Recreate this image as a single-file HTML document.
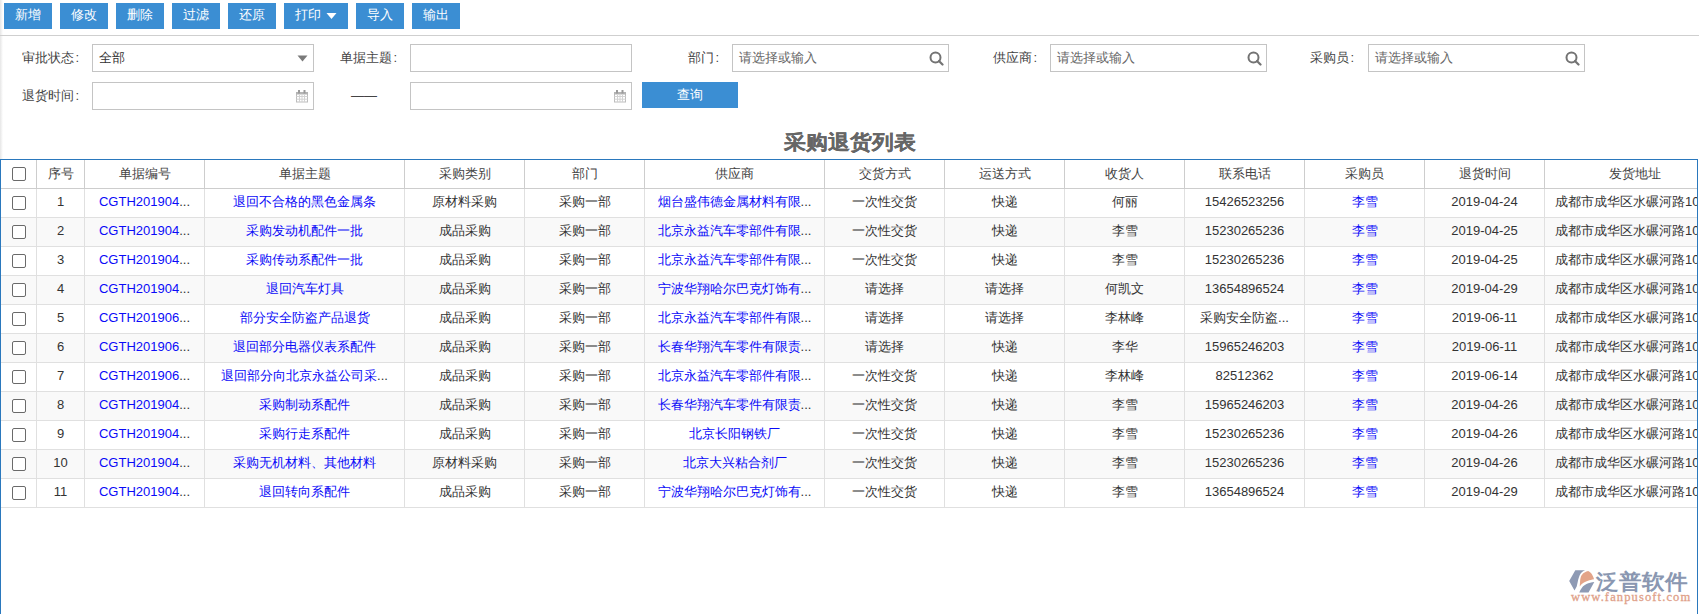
<!DOCTYPE html>
<html><head><meta charset="utf-8">
<style>
*{margin:0;padding:0;box-sizing:border-box;}
html,body{width:1699px;height:614px;overflow:hidden;background:#fff;}
body{font-family:"Liberation Sans",sans-serif;font-size:13px;color:#333;position:relative;}
.edge{position:absolute;left:0;top:0;width:3px;height:159px;background:linear-gradient(to right,#e6e6e6,#fff);}
.btn{position:absolute;top:3px;height:26px;width:48px;background:#3b8ed3;color:#fff;font-size:13px;line-height:24px;text-align:center;}
.sep{position:absolute;left:0;top:35px;width:1699px;height:1px;background:#cfcfcf;}
.lbl{position:absolute;font-size:13px;color:#444;line-height:28px;white-space:nowrap;}
.box{position:absolute;height:28px;border:1px solid #c4c4c4;background:#fff;}
.ph{position:absolute;left:6px;top:0;line-height:25px;color:#666;font-size:13px;}
.title{position:absolute;left:0;width:1699px;top:127px;text-align:center;font-size:22px;font-weight:bold;color:#666;line-height:30px;-webkit-text-stroke:0.2px #666;transform:scaleY(0.92);transform-origin:50% 80%;}
.grid{position:absolute;left:0;top:159px;width:1698px;height:460px;border:1px solid #2a78bd;border-bottom:none;overflow:hidden;}
.row{display:flex;height:29px;white-space:nowrap;}
.c{position:relative;flex:none;height:29px;border-right:1px solid #e0e0e0;border-bottom:1px solid #e0e0e0;text-align:center;line-height:26px;overflow:hidden;}
.ad{text-align:left;padding-left:10px;}
.hd .c{border-color:#cdcdcd;color:#444;line-height:27px;}
.alt{background:#f9f9f9;}
.lk{color:#333;}
.lk b{font-weight:normal;color:#0a0af8;}
.ic{position:absolute;}
.lbl i{font-style:normal;margin-left:1.5px;}
.cb{position:absolute;left:11px;top:7px;width:14px;height:14px;border:1px solid #6a6a6a;border-radius:2px;background:#fff;}
</style></head><body>
<div class="edge"></div>
<div class="btn" style="left:4px">新增</div>
<div class="btn" style="left:60px">修改</div>
<div class="btn" style="left:116px">删除</div>
<div class="btn" style="left:172px">过滤</div>
<div class="btn" style="left:228px">还原</div>
<div class="btn" style="left:284px;width:64px;text-align:left;padding-left:11px">打印<svg class="ic" style="left:42px;top:10px" width="11" height="6"><path d="M0.5 0H10.5L5.5 6Z" fill="#fff"/></svg></div>
<div class="btn" style="left:356px">导入</div>
<div class="btn" style="left:412px">输出</div>
<div class="sep"></div>

<div class="lbl" style="left:22px;top:44px">审批状态<i>:</i></div>
<div class="box" style="left:92px;top:44px;width:222px"><span class="ph" style="color:#333;left:6px">全部</span><svg class="ic" style="left:203.5px;top:9.5px" width="11" height="7"><path d="M0.5 0.5H10.5L5.5 6.5Z" fill="#7a7a7a"/></svg></div>
<div class="lbl" style="left:340px;top:44px">单据主题<i>:</i></div>
<div class="box" style="left:410px;top:44px;width:222px"></div>
<div class="lbl" style="left:688px;top:44px">部门<i>:</i></div>
<div class="box" style="left:732px;top:44px;width:217px"><span class="ph">请选择或输入</span><svg class="ic" style="left:195px;top:5px" width="16" height="16" viewBox="0 0 16 16"><circle cx="7.5" cy="7.5" r="5" fill="none" stroke="#737373" stroke-width="2"/><path d="M11 11L14.5 14.5" stroke="#737373" stroke-width="2.2" stroke-linecap="round"/></svg></div>
<div class="lbl" style="left:993px;top:44px">供应商<i>:</i></div>
<div class="box" style="left:1050px;top:44px;width:217px"><span class="ph">请选择或输入</span><svg class="ic" style="left:195px;top:5px" width="16" height="16" viewBox="0 0 16 16"><circle cx="7.5" cy="7.5" r="5" fill="none" stroke="#737373" stroke-width="2"/><path d="M11 11L14.5 14.5" stroke="#737373" stroke-width="2.2" stroke-linecap="round"/></svg></div>
<div class="lbl" style="left:1310px;top:44px">采购员<i>:</i></div>
<div class="box" style="left:1368px;top:44px;width:217px"><span class="ph">请选择或输入</span><svg class="ic" style="left:195px;top:5px" width="16" height="16" viewBox="0 0 16 16"><circle cx="7.5" cy="7.5" r="5" fill="none" stroke="#737373" stroke-width="2"/><path d="M11 11L14.5 14.5" stroke="#737373" stroke-width="2.2" stroke-linecap="round"/></svg></div>

<div class="lbl" style="left:22px;top:82px">退货时间<i>:</i></div>
<div class="box" style="left:92px;top:82px;width:222px"><svg class="ic" style="left:203px;top:7px" width="13" height="13" viewBox="0 0 13 13"><rect x="0.5" y="2.5" width="11" height="9.5" fill="none" stroke="#bdbdbd"/><path d="M3.5 5V12M6 5V12M8.5 5V12M0.5 6.5H11.5M0.5 9.2H11.5" stroke="#d2d2d2" stroke-width="1" fill="none"/><rect x="0" y="2" width="12" height="2.5" fill="#b4b4b4"/><rect x="2" y="0" width="2" height="3.5" fill="#9a9a9a"/><rect x="7.5" y="0" width="2" height="3.5" fill="#9a9a9a"/></svg></div>
<div class="lbl" style="left:351px;top:82px">——</div>
<div class="box" style="left:410px;top:82px;width:222px"><svg class="ic" style="left:203px;top:7px" width="13" height="13" viewBox="0 0 13 13"><rect x="0.5" y="2.5" width="11" height="9.5" fill="none" stroke="#bdbdbd"/><path d="M3.5 5V12M6 5V12M8.5 5V12M0.5 6.5H11.5M0.5 9.2H11.5" stroke="#d2d2d2" stroke-width="1" fill="none"/><rect x="0" y="2" width="12" height="2.5" fill="#b4b4b4"/><rect x="2" y="0" width="2" height="3.5" fill="#9a9a9a"/><rect x="7.5" y="0" width="2" height="3.5" fill="#9a9a9a"/></svg></div>
<div class="btn" style="left:642px;top:82px;width:96px;height:26px;font-size:13px;line-height:25px">查询</div>

<div class="title">采购退货列表</div>

<div class="grid">
<div class="row hd">
<div class="c" style="width:36px"><span class="cb"></span></div><div class="c" style="width:48px">序号</div><div class="c" style="width:120px">单据编号</div><div class="c" style="width:200px">单据主题</div><div class="c" style="width:120px">采购类别</div><div class="c" style="width:120px">部门</div><div class="c" style="width:180px">供应商</div><div class="c" style="width:120px">交货方式</div><div class="c" style="width:120px">运送方式</div><div class="c" style="width:120px">收货人</div><div class="c" style="width:120px">联系电话</div><div class="c" style="width:120px">采购员</div><div class="c" style="width:120px">退货时间</div><div class="c" style="width:180px">发货地址</div>
</div>
<!--ROWS-->
<div class="row"><div class="c" style="width:36px"><span class="cb"></span></div><div class="c" style="width:48px">1</div><div class="c lk" style="width:120px"><b>CGTH201904</b>...</div><div class="c lk" style="width:200px"><b>退回不合格的黑色金属条</b></div><div class="c" style="width:120px">原材料采购</div><div class="c" style="width:120px">采购一部</div><div class="c lk" style="width:180px"><b>烟台盛伟德金属材料有限</b>...</div><div class="c" style="width:120px">一次性交货</div><div class="c" style="width:120px">快递</div><div class="c" style="width:120px">何丽</div><div class="c" style="width:120px">15426523256</div><div class="c lk" style="width:120px"><b>李雪</b></div><div class="c" style="width:120px">2019-04-24</div><div class="c ad" style="width:200px">成都市成华区水碾河路10号</div></div>
<div class="row alt"><div class="c" style="width:36px"><span class="cb"></span></div><div class="c" style="width:48px">2</div><div class="c lk" style="width:120px"><b>CGTH201904</b>...</div><div class="c lk" style="width:200px"><b>采购发动机配件一批</b></div><div class="c" style="width:120px">成品采购</div><div class="c" style="width:120px">采购一部</div><div class="c lk" style="width:180px"><b>北京永益汽车零部件有限</b>...</div><div class="c" style="width:120px">一次性交货</div><div class="c" style="width:120px">快递</div><div class="c" style="width:120px">李雪</div><div class="c" style="width:120px">15230265236</div><div class="c lk" style="width:120px"><b>李雪</b></div><div class="c" style="width:120px">2019-04-25</div><div class="c ad" style="width:200px">成都市成华区水碾河路10号</div></div>
<div class="row"><div class="c" style="width:36px"><span class="cb"></span></div><div class="c" style="width:48px">3</div><div class="c lk" style="width:120px"><b>CGTH201904</b>...</div><div class="c lk" style="width:200px"><b>采购传动系配件一批</b></div><div class="c" style="width:120px">成品采购</div><div class="c" style="width:120px">采购一部</div><div class="c lk" style="width:180px"><b>北京永益汽车零部件有限</b>...</div><div class="c" style="width:120px">一次性交货</div><div class="c" style="width:120px">快递</div><div class="c" style="width:120px">李雪</div><div class="c" style="width:120px">15230265236</div><div class="c lk" style="width:120px"><b>李雪</b></div><div class="c" style="width:120px">2019-04-25</div><div class="c ad" style="width:200px">成都市成华区水碾河路10号</div></div>
<div class="row alt"><div class="c" style="width:36px"><span class="cb"></span></div><div class="c" style="width:48px">4</div><div class="c lk" style="width:120px"><b>CGTH201904</b>...</div><div class="c lk" style="width:200px"><b>退回汽车灯具</b></div><div class="c" style="width:120px">成品采购</div><div class="c" style="width:120px">采购一部</div><div class="c lk" style="width:180px"><b>宁波华翔哈尔巴克灯饰有</b>...</div><div class="c" style="width:120px">请选择</div><div class="c" style="width:120px">请选择</div><div class="c" style="width:120px">何凯文</div><div class="c" style="width:120px">13654896524</div><div class="c lk" style="width:120px"><b>李雪</b></div><div class="c" style="width:120px">2019-04-29</div><div class="c ad" style="width:200px">成都市成华区水碾河路10号</div></div>
<div class="row"><div class="c" style="width:36px"><span class="cb"></span></div><div class="c" style="width:48px">5</div><div class="c lk" style="width:120px"><b>CGTH201906</b>...</div><div class="c lk" style="width:200px"><b>部分安全防盗产品退货</b></div><div class="c" style="width:120px">成品采购</div><div class="c" style="width:120px">采购一部</div><div class="c lk" style="width:180px"><b>北京永益汽车零部件有限</b>...</div><div class="c" style="width:120px">请选择</div><div class="c" style="width:120px">请选择</div><div class="c" style="width:120px">李林峰</div><div class="c" style="width:120px">采购安全防盗...</div><div class="c lk" style="width:120px"><b>李雪</b></div><div class="c" style="width:120px">2019-06-11</div><div class="c ad" style="width:200px">成都市成华区水碾河路10号</div></div>
<div class="row alt"><div class="c" style="width:36px"><span class="cb"></span></div><div class="c" style="width:48px">6</div><div class="c lk" style="width:120px"><b>CGTH201906</b>...</div><div class="c lk" style="width:200px"><b>退回部分电器仪表系配件</b></div><div class="c" style="width:120px">成品采购</div><div class="c" style="width:120px">采购一部</div><div class="c lk" style="width:180px"><b>长春华翔汽车零件有限责</b>...</div><div class="c" style="width:120px">请选择</div><div class="c" style="width:120px">快递</div><div class="c" style="width:120px">李华</div><div class="c" style="width:120px">15965246203</div><div class="c lk" style="width:120px"><b>李雪</b></div><div class="c" style="width:120px">2019-06-11</div><div class="c ad" style="width:200px">成都市成华区水碾河路10号</div></div>
<div class="row"><div class="c" style="width:36px"><span class="cb"></span></div><div class="c" style="width:48px">7</div><div class="c lk" style="width:120px"><b>CGTH201906</b>...</div><div class="c lk" style="width:200px"><b>退回部分向北京永益公司采</b>...</div><div class="c" style="width:120px">成品采购</div><div class="c" style="width:120px">采购一部</div><div class="c lk" style="width:180px"><b>北京永益汽车零部件有限</b>...</div><div class="c" style="width:120px">一次性交货</div><div class="c" style="width:120px">快递</div><div class="c" style="width:120px">李林峰</div><div class="c" style="width:120px">82512362</div><div class="c lk" style="width:120px"><b>李雪</b></div><div class="c" style="width:120px">2019-06-14</div><div class="c ad" style="width:200px">成都市成华区水碾河路10号</div></div>
<div class="row alt"><div class="c" style="width:36px"><span class="cb"></span></div><div class="c" style="width:48px">8</div><div class="c lk" style="width:120px"><b>CGTH201904</b>...</div><div class="c lk" style="width:200px"><b>采购制动系配件</b></div><div class="c" style="width:120px">成品采购</div><div class="c" style="width:120px">采购一部</div><div class="c lk" style="width:180px"><b>长春华翔汽车零件有限责</b>...</div><div class="c" style="width:120px">一次性交货</div><div class="c" style="width:120px">快递</div><div class="c" style="width:120px">李雪</div><div class="c" style="width:120px">15965246203</div><div class="c lk" style="width:120px"><b>李雪</b></div><div class="c" style="width:120px">2019-04-26</div><div class="c ad" style="width:200px">成都市成华区水碾河路10号</div></div>
<div class="row"><div class="c" style="width:36px"><span class="cb"></span></div><div class="c" style="width:48px">9</div><div class="c lk" style="width:120px"><b>CGTH201904</b>...</div><div class="c lk" style="width:200px"><b>采购行走系配件</b></div><div class="c" style="width:120px">成品采购</div><div class="c" style="width:120px">采购一部</div><div class="c lk" style="width:180px"><b>北京长阳钢铁厂</b></div><div class="c" style="width:120px">一次性交货</div><div class="c" style="width:120px">快递</div><div class="c" style="width:120px">李雪</div><div class="c" style="width:120px">15230265236</div><div class="c lk" style="width:120px"><b>李雪</b></div><div class="c" style="width:120px">2019-04-26</div><div class="c ad" style="width:200px">成都市成华区水碾河路10号</div></div>
<div class="row alt"><div class="c" style="width:36px"><span class="cb"></span></div><div class="c" style="width:48px">10</div><div class="c lk" style="width:120px"><b>CGTH201904</b>...</div><div class="c lk" style="width:200px"><b>采购无机材料、其他材料</b></div><div class="c" style="width:120px">原材料采购</div><div class="c" style="width:120px">采购一部</div><div class="c lk" style="width:180px"><b>北京大兴粘合剂厂</b></div><div class="c" style="width:120px">一次性交货</div><div class="c" style="width:120px">快递</div><div class="c" style="width:120px">李雪</div><div class="c" style="width:120px">15230265236</div><div class="c lk" style="width:120px"><b>李雪</b></div><div class="c" style="width:120px">2019-04-26</div><div class="c ad" style="width:200px">成都市成华区水碾河路10号</div></div>
<div class="row"><div class="c" style="width:36px"><span class="cb"></span></div><div class="c" style="width:48px">11</div><div class="c lk" style="width:120px"><b>CGTH201904</b>...</div><div class="c lk" style="width:200px"><b>退回转向系配件</b></div><div class="c" style="width:120px">成品采购</div><div class="c" style="width:120px">采购一部</div><div class="c lk" style="width:180px"><b>宁波华翔哈尔巴克灯饰有</b>...</div><div class="c" style="width:120px">一次性交货</div><div class="c" style="width:120px">快递</div><div class="c" style="width:120px">李雪</div><div class="c" style="width:120px">13654896524</div><div class="c lk" style="width:120px"><b>李雪</b></div><div class="c" style="width:120px">2019-04-29</div><div class="c ad" style="width:200px">成都市成华区水碾河路10号</div></div>
<!--/ROWS-->
</div>
<div class="logo" style="position:absolute;left:1566px;top:566px;width:130px;height:44px;">
<svg style="position:absolute;left:0;top:0" width="32" height="30" viewBox="0 0 32 30">
<path d="M3.2 15.1L9.3 4.2H19.1C16.6 5.3 15.2 6.6 14.2 8.2C13.2 10 12.3 13 11.7 16.1L10.7 20.5L8.5 24.4Z" fill="#8e9ab4"/>
<path d="M13.7 20.5L14.2 13.7C14.6 11.5 15 10.2 15.6 9.3C16.5 7.8 17.4 7 18.6 6.4C19.8 5.7 21 5.3 22.2 5.1C24 6 25 7 25.9 8.3C26.9 9.8 27.6 11.5 28.1 13.2C25.6 13.6 23.8 14.1 22 14.7C20.2 15.3 18.7 16.1 17.1 17.1C15.8 18 14.7 19.2 13.7 20.5Z" fill="#e3a489"/>
<path d="M13.2 26.6C14.1 24.6 15 22.8 16.1 21.5C17.4 19.9 18.8 18.9 20.5 18.1C22.9 17 25.5 16.5 28.3 16.1L22.5 26.6Z" fill="#8e9ab4"/>
</svg>
<div style="position:absolute;left:30px;top:2px;font-size:23px;line-height:26px;color:#8a97b1;font-weight:700;white-space:nowrap;transform:scaleY(0.93);transform-origin:50% 60%;">泛普软件</div>
<div style="position:absolute;left:5px;top:24px;font-family:'Liberation Serif',serif;font-size:12.5px;line-height:14px;color:#e0a088;letter-spacing:1.12px;-webkit-text-stroke:0.3px #e0a088;white-space:nowrap;">www.fanpusoft.com</div>
</div>
</body></html>
